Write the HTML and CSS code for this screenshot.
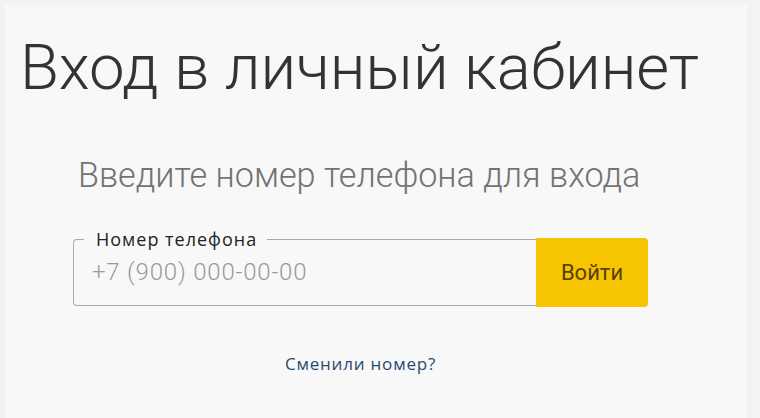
FILE: index.html
```html
<!DOCTYPE html>
<html lang="ru">
<head>
<meta charset="utf-8">
<title>Вход в личный кабинет</title>
<link rel="stylesheet" href="styles.css">
</head>
<body>
<main class="page">
  <h1 class="title">Вход в личный кабинет</h1>
  <p class="subtitle">Введите номер телефона для входа</p>
  <form class="login">
    <div class="login-row">
      <fieldset class="phone-field">
        <legend class="phone-label">Номер телефона</legend>
        <input class="phone-input" type="tel" placeholder="+7 (900) 000-00-00">
      </fieldset>
      <button class="submit" type="button">Войти</button>
    </div>
    <a class="change-link" href="#">Сменили номер?</a>
  </form>
</main>
</body>
</html>
```
FILE: styles.css
```css
html, body {
  margin: 0;
  padding: 0;
  background: #f3f3f3;
}
body {
  padding: 5px 13px 0 5px;
  height: 418px;
  box-sizing: border-box;
  font-family: Roboto, "Noto Sans", sans-serif;
}
.page {
  background: #f8f8f8;
  height: 100%;
  padding: 0 0 0 15px;
  box-sizing: border-box;
  overflow: hidden;
}
.title {
  margin: 0;
  padding-top: 26px;
  font-weight: 300;
  font-size: 63.5px;
  line-height: 74px;
  color: #333333;
  letter-spacing: -0.1px;
}
.subtitle {
  margin: 0;
  padding: 50px 0 0 58px;
  font-weight: 300;
  font-size: 34.2px;
  line-height: 40px;
  color: #737373;
}
.login {
  margin: 33px 0 0 53px;
  width: 575px;
  display: flex;
  flex-direction: column;
}
.login-row {
  display: flex;
  align-items: flex-end;
}
.phone-field {
  flex: 1;
  margin: 0;
  padding: 0 0 0 18px;
  height: 78px;
  border: 1px solid #a9a9a9;
  border-right: none;
  border-radius: 4px 0 0 4px;
  min-width: 0;
  box-sizing: border-box;
}
.phone-label {
  padding: 0 10px 0 12px;
  margin-left: -8px;
  font-family: "Open Sans", sans-serif;
  font-size: 18px;
  letter-spacing: 1px;
  line-height: 22px;
  color: #222222;
}
.phone-input {
  display: block;
  width: 100%;
  border: none;
  background: transparent;
  padding: 0;
  margin-top: 7px;
  font-family: Roboto, sans-serif;
  font-weight: 300;
  font-size: 24px;
  letter-spacing: 0.8px;
  line-height: 30px;
  color: #333;
  outline: none;
}
.phone-input::placeholder {
  color: #9a9a9a;
}
.submit {
  width: 112px;
  height: 69px;
  border: none;
  border-radius: 0 4px 4px 0;
  background: #f6c400;
  color: #5a4000;
  font-family: Roboto, sans-serif;
  font-size: 22px;
  padding: 0;
  margin-bottom: -1px;
}
.change-link {
  align-self: center;
  margin-top: 46px;
  font-family: "Open Sans", sans-serif;
  font-size: 17px;
  letter-spacing: 0.8px;
  color: #2b4a6f;
  text-decoration: none;
}
```
